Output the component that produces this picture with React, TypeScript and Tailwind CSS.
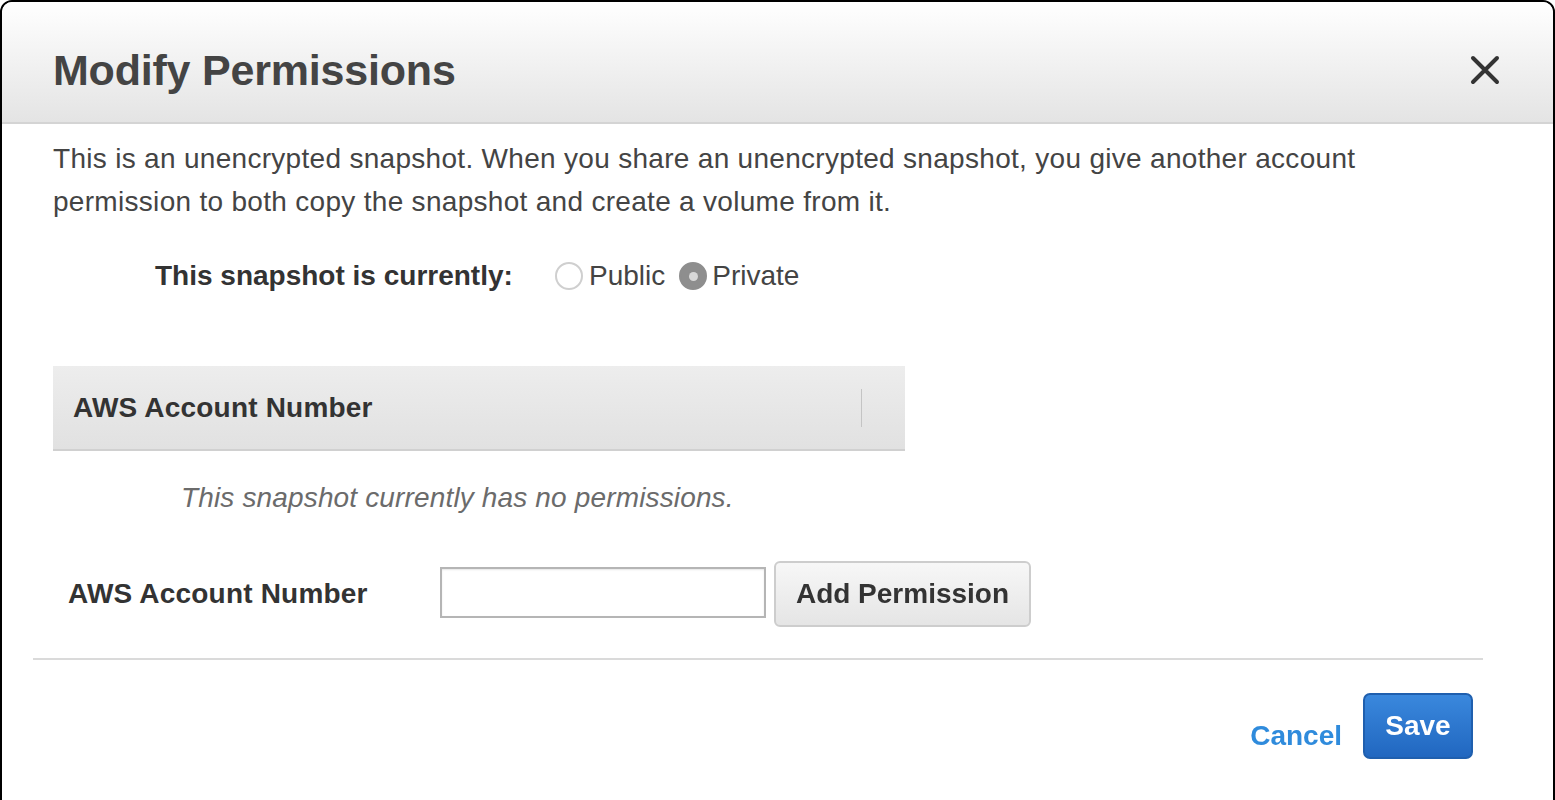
import { useState } from 'react';

export default function App() {
  const [visibility, setVisibility] = useState<'public' | 'private'>('private');
  const [account, setAccount] = useState('');

  return (
    <div className="h-[800px] w-[1555px] overflow-hidden bg-white" style={{ fontFamily: '"Liberation Sans", Arial, sans-serif' }}>
      <div className="flex h-[820px] flex-col rounded-t-[12px] border-2 border-black bg-white">
        {/* header */}
        <header className="flex h-[122px] shrink-0 items-center justify-between rounded-t-[10px] border-b-2 border-[#d4d4d4] bg-gradient-to-b from-white to-[#e4e4e4] pl-[51px] pr-[52px] pt-[16px]">
          <h1 className="text-[43px] font-bold tracking-[-0.2px] text-[#444]">Modify Permissions</h1>
          <button className="text-[#333]">
            <svg width="32" height="32" viewBox="0 0 32 32" stroke="currentColor" strokeWidth="4" strokeLinecap="round">
              <path d="M4 4 L28 28 M28 4 L4 28" />
            </svg>
          </button>
        </header>

        {/* body */}
        <main className="flex flex-col px-[51px] pt-[13px]">
          <p className="text-[28px] leading-[43px] tracking-[0.3px] text-[#444]">
            This is an unencrypted snapshot. When you share an unencrypted snapshot, you give another account
            <br />
            permission to both copy the snapshot and create a volume from it.
          </p>

          <div className="mt-[32px] flex items-center pl-[102px]">
            <span className="w-[400px] text-[28px] font-bold text-[#333]">This snapshot is currently:</span>
            <label className="flex items-center gap-[6px] text-[28px] text-[#444]" onClick={() => setVisibility('public')}>
              <span className={`flex h-[28px] w-[28px] items-center justify-center rounded-full border-2 ${visibility === 'public' ? 'border-[#8e8e8e] bg-[#8e8e8e]' : 'border-[#cfcfcf] bg-white'}`}>
                {visibility === 'public' && <span className="h-[9px] w-[9px] rounded-full bg-[#d8d8d8]" />}
              </span>
              Public
            </label>
            <label className="ml-[14px] flex items-center gap-[5px] text-[28px] text-[#444]" onClick={() => setVisibility('private')}>
              <span className={`flex h-[28px] w-[28px] items-center justify-center rounded-full border-2 ${visibility === 'private' ? 'border-[#8e8e8e] bg-[#8e8e8e]' : 'border-[#cfcfcf] bg-white'}`}>
                {visibility === 'private' && <span className="h-[9px] w-[9px] rounded-full bg-[#d8d8d8]" />}
              </span>
              Private
            </label>
          </div>

          {/* permissions table */}
          <div className="mt-[69px] flex h-[85px] w-[852px] items-center justify-between border-b-2 border-[#d0d0d0] bg-gradient-to-b from-[#ededed] to-[#e1e1e1] pl-[20px] pr-[43px]">
            <span className="text-[28px] font-bold tracking-[0.2px] text-[#333]">AWS Account Number</span>
            <span className="h-[38px] w-px bg-[#c4c4c4]" />
          </div>
          <p className="mt-[26px] pl-[128px] text-[28px] italic tracking-[0.15px] text-[#6b6b6b]">This snapshot currently has no permissions.</p>

          <div className="mt-[42px] flex items-center pl-[15px]">
            <span className="w-[372px] text-[28px] font-bold tracking-[0.2px] text-[#333]">AWS Account Number</span>
            <input
              value={account}
              onChange={(e) => setAccount(e.target.value)}
              autoFocus
              className="mb-[3px] h-[51px] w-[326px] border-2 border-[#b5b5b5] bg-white px-[8px] text-[26px] text-[#333] shadow-[inset_0_1px_2px_rgba(0,0,0,0.1)] outline-none caret-[#222]"
            />
            <button className="ml-[8px] h-[66px] w-[257px] rounded-[6px] border-2 border-[#cdcdcd] bg-gradient-to-b from-[#f7f7f7] to-[#e5e5e5] text-[28px] font-bold text-[#333]">
              Add Permission
            </button>
          </div>
        </main>

        <div className="mx-[31px] mt-[31px] h-[2px] w-[1450px] bg-[#dadada]" />

        <footer className="flex items-center justify-end gap-[21px] pr-[80px] pt-[33px]">
          <button className="mt-[19px] text-[28px] font-bold text-[#2f8bdc]">Cancel</button>
          <button className="h-[66px] w-[110px] rounded-[7px] border-2 border-[#1f5fae] bg-gradient-to-b from-[#3a88dd] to-[#2167c0] text-[28px] font-bold text-white">
            Save
          </button>
        </footer>
      </div>
    </div>
  );
}
